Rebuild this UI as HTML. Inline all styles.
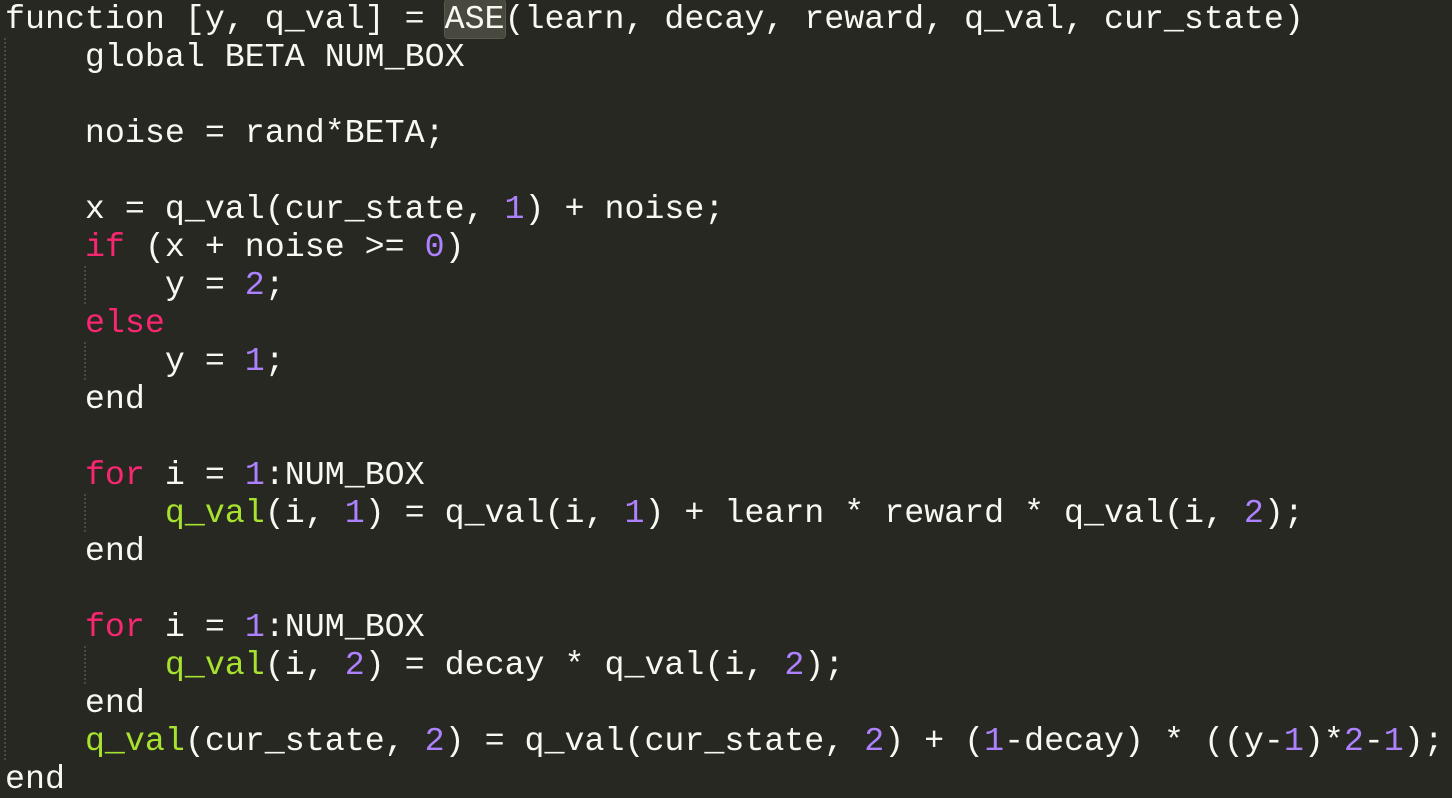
<!DOCTYPE html><html><head><style>
body{margin:0;width:1452px;height:796px;background:#272822;overflow:hidden;position:relative}
pre{margin:0;position:absolute;left:5px;top:0;font-family:"Liberation Mono",monospace;font-size:33.3px;line-height:38px;color:#f8f8f2}
.k{color:#f92672}.n{color:#ae81ff}.g{color:#a6e22e}
.hl{background:#49483e;border-radius:3px;box-shadow:0 0 0 1px #5a5950}
.gd{position:absolute;width:0;border-left:2px dotted #4a4a42}
</style></head><body>
<div class="gd" style="left:4px;top:38px;height:722px"></div>
<div class="gd" style="left:84px;top:266px;height:38px"></div>
<div class="gd" style="left:84px;top:342px;height:38px"></div>
<div class="gd" style="left:84px;top:494px;height:38px"></div>
<div class="gd" style="left:84px;top:646px;height:38px"></div>
<pre>function [y, q_val] = <span class="hl">ASE</span>(learn, decay, reward, q_val, cur_state)
    global BETA NUM_BOX

    noise = rand*BETA;

    x = q_val(cur_state, <span class="n">1</span>) + noise;
    <span class="k">if</span> (x + noise &gt;= <span class="n">0</span>)
        y = <span class="n">2</span>;
    <span class="k">else</span>
        y = <span class="n">1</span>;
    end

    <span class="k">for</span> i = <span class="n">1</span>:NUM_BOX
        <span class="g">q_val</span>(i, <span class="n">1</span>) = q_val(i, <span class="n">1</span>) + learn * reward * q_val(i, <span class="n">2</span>);
    end

    <span class="k">for</span> i = <span class="n">1</span>:NUM_BOX
        <span class="g">q_val</span>(i, <span class="n">2</span>) = decay * q_val(i, <span class="n">2</span>);
    end
    <span class="g">q_val</span>(cur_state, <span class="n">2</span>) = q_val(cur_state, <span class="n">2</span>) + (<span class="n">1</span>-decay) * ((y-<span class="n">1</span>)*<span class="n">2</span>-<span class="n">1</span>);
end</pre>
</body></html>
